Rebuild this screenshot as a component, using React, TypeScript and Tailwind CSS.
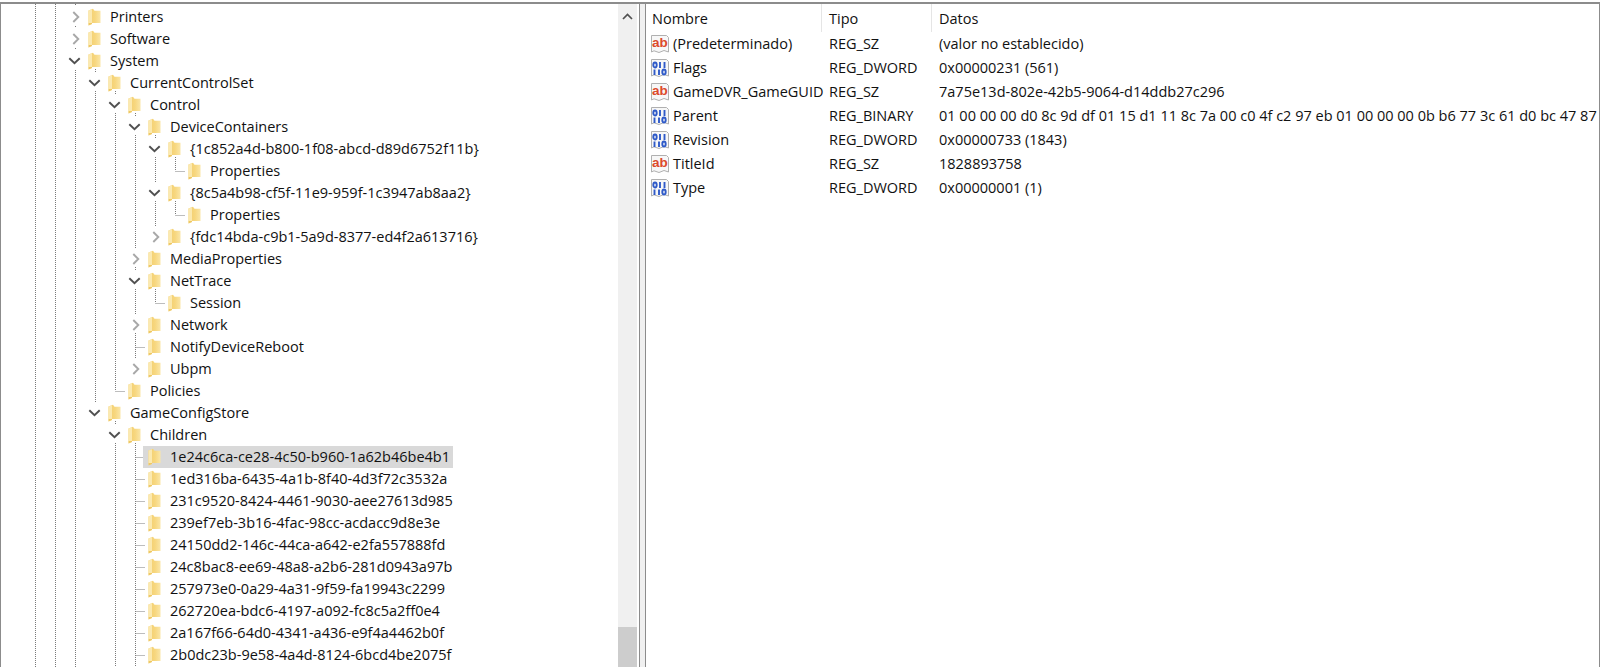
import React from "react";

type Row = { label: string; level: number; chev?: "open" | "closed"; selected?: boolean; more?: boolean };

const rows: Row[] = [
  { label: "Printers", level: 0, chev: "closed" },
  { label: "Software", level: 0, chev: "closed" },
  { label: "System", level: 0, chev: "open" },
  { label: "CurrentControlSet", level: 1, chev: "open" },
  { label: "Control", level: 2, chev: "open" },
  { label: "DeviceContainers", level: 3, chev: "open" },
  { label: "{1c852a4d-b800-1f08-abcd-d89d6752f11b}", level: 4, chev: "open" },
  { label: "Properties", level: 5 },
  { label: "{8c5a4b98-cf5f-11e9-959f-1c3947ab8aa2}", level: 4, chev: "open" },
  { label: "Properties", level: 5 },
  { label: "{fdc14bda-c9b1-5a9d-8377-ed4f2a613716}", level: 4, chev: "closed" },
  { label: "MediaProperties", level: 3, chev: "closed" },
  { label: "NetTrace", level: 3, chev: "open" },
  { label: "Session", level: 4 },
  { label: "Network", level: 3, chev: "closed" },
  { label: "NotifyDeviceReboot", level: 3 },
  { label: "Ubpm", level: 3, chev: "closed" },
  { label: "Policies", level: 2 },
  { label: "GameConfigStore", level: 1, chev: "open", more: true },
  { label: "Children", level: 2, chev: "open", more: true },
  { label: "1e24c6ca-ce28-4c50-b960-1a62b46be4b1", level: 3, selected: true },
  { label: "1ed316ba-6435-4a1b-8f40-4d3f72c3532a", level: 3 },
  { label: "231c9520-8424-4461-9030-aee27613d985", level: 3 },
  { label: "239ef7eb-3b16-4fac-98cc-acdacc9d8e3e", level: 3 },
  { label: "24150dd2-146c-44ca-a642-e2fa557888fd", level: 3 },
  { label: "24c8bac8-ee69-48a8-a2b6-281d0943a97b", level: 3 },
  { label: "257973e0-0a29-4a31-9f59-fa19943c2299", level: 3 },
  { label: "262720ea-bdc6-4197-a092-fc8c5a2ff0e4", level: 3 },
  { label: "2a167f66-64d0-4341-a436-e9f4a4462b0f", level: 3 },
  { label: "2b0dc23b-9e58-4a4d-8124-6bcd4be2075f", level: 3 },
];

const values: { name: string; kind: "sz" | "bin"; type: string; data: string }[] = [
  { name: "(Predeterminado)", kind: "sz", type: "REG_SZ", data: "(valor no establecido)" },
  { name: "Flags", kind: "bin", type: "REG_DWORD", data: "0x00000231 (561)" },
  { name: "GameDVR_GameGUID", kind: "sz", type: "REG_SZ", data: "7a75e13d-802e-42b5-9064-d14ddb27c296" },
  { name: "Parent", kind: "bin", type: "REG_BINARY", data: "01 00 00 00 d0 8c 9d df 01 15 d1 11 8c 7a 00 c0 4f c2 97 eb 01 00 00 00 0b b6 77 3c 61 d0 bc 47 87 e" },
  { name: "Revision", kind: "bin", type: "REG_DWORD", data: "0x00000733 (1843)" },
  { name: "TitleId", kind: "sz", type: "REG_SZ", data: "1828893758" },
  { name: "Type", kind: "bin", type: "REG_DWORD", data: "0x00000001 (1)" },
];

function Folder() {
  return (
    <svg width="13" height="18" viewBox="0 0 13 18" className="shrink-0">
      <defs>
        <linearGradient id="fold" x1="0" y1="0" x2="1" y2="0">
          <stop offset="0" stopColor="#f2cd6c" />
          <stop offset="0.55" stopColor="#f7d77f" />
          <stop offset="1" stopColor="#fae6a8" />
        </linearGradient>
      </defs>
      <path d="M0.5 2.5 L5 0.8 L6.5 2.8 H12.5 V15 H0.5 Z" fill="url(#fold)" />
      <path d="M0.5 2.5 L4 1.2 V16 L0.5 17.5 Z" fill="#fbe9b0" />
      <path d="M0.5 17.5 L4 16 V15 H0.5 Z" fill="#eec765" />
    </svg>
  );
}

function Chevron({ open }: { open: boolean }) {
  return open ? (
    <svg width="13" height="8" viewBox="0 0 13 8" className="shrink-0 ml-[-2px]">
      <path d="M1.3 1.3 L6.5 6.3 L11.7 1.3" fill="none" stroke="#505050" strokeWidth="1.9" />
    </svg>
  ) : (
    <svg width="8" height="12" viewBox="0 0 8 12" className="shrink-0 ml-[2px]">
      <path d="M1.3 1 L6.3 6 L1.3 11" fill="none" stroke="#a8a8a8" strokeWidth="1.9" />
    </svg>
  );
}

function ValueIcon({ kind }: { kind: "sz" | "bin" }) {
  return (
    <svg width="20" height="20" viewBox="0 0 20 20" className="shrink-0">
      <path d="M1.5 1.5 H16.5 L18.5 3.5 V18 L14 16.5 L9 18.5 L4 16.8 L1.5 18 Z" fill="#f7f7f7" stroke="#b0b0b0" />
      {kind === "sz" ? (
        <text x="2" y="12.5" fontSize="13.5" fontWeight="700" fill="#dd4a2c" fontFamily="Liberation Sans, sans-serif">ab</text>
      ) : (
        <g fill="none" stroke="#2f5ac8" strokeWidth="1.9">
          <ellipse cx="5" cy="7" rx="1.7" ry="2.5" />
          <path d="M10 4 V10" />
          <path d="M14.5 4 V10" />
          <path d="M4.5 11.5 V17" />
          <path d="M9 11.5 V17" />
          <ellipse cx="14" cy="14" rx="1.7" ry="2.5" />
        </g>
      )}
    </svg>
  );
}

const ROW = 22;
const TOP = 2;

function Guides() {
  const segs: React.ReactNode[] = [];
  const masks: React.ReactNode[] = [];
  [34, 54, 74].forEach((x) => segs.push(<path key={x} d={`M${x}.5 0 V667`} />));
  rows.forEach((r, i) => {
    const cx = 74 + r.level * 20;
    const y = TOP + i * ROW + 11;
    if (!r.chev) segs.push(<path key={`h${i}`} d={`M${cx}.5 ${y}.5 H${cx + 10}`} />);
    if (r.chev) masks.push(<rect key={`m${i}`} x={cx - 1} y={y - 11} width="3" height="19" fill="#fff" stroke="none" />);
    if (r.chev === "open") {
      let end = i;
      for (let j = i + 1; j < rows.length && rows[j].level > r.level; j++) {
        if (rows[j].level === r.level + 1) end = j;
      }
      const endY = r.more ? 667 : TOP + end * ROW + 11;
      segs.push(<path key={`v${i}`} d={`M${cx + 20}.5 ${y + 8} V${endY}`} />);
    }
  });
  return (
    <svg className="absolute inset-0 pointer-events-none" width="618" height="667" fill="none" stroke="#7a7a7a" strokeDasharray="1 1">
      {segs}
      {masks}
    </svg>
  );
}

export default function App() {
  return (
    <div
      className="h-[667px] w-[1600px] overflow-hidden bg-white text-[14.5px] text-[#111111] flex flex-col"
      style={{ fontFamily: '"Open Sans", "Noto Sans", sans-serif' }}
    >
      <div className="h-[4px] bg-[#8c8c8c] shrink-0 border-t-2 border-white" />
      <div className="flex flex-1 min-h-0">
        <div className="relative w-[618px] overflow-hidden border-l border-[#8c8c8c] pt-[2px]">
          <Guides />
          {rows.map((r, i) => (
            <div key={i} className="relative h-[22px] flex items-center" style={{ paddingLeft: 69 + r.level * 20 }}>
              <span className="w-[13px] flex items-center shrink-0">
                {r.chev ? <Chevron open={r.chev === "open"} /> : null}
              </span>
              <span className={`flex items-center h-[22px] pl-[5px] ${r.selected ? "bg-[#d9d9d9]" : ""}`}>
                <Folder />
                <span className="pl-[9px] pr-[3px] whitespace-nowrap leading-[22px]">{r.label}</span>
              </span>
            </div>
          ))}
        </div>
        <div className="w-[19px] shrink-0 bg-[#f0f0f0] flex flex-col items-center justify-between">
          <svg width="11" height="7" viewBox="0 0 11 7" className="mt-[9px]">
            <path d="M1 6 L5.5 1.5 L10 6" fill="none" stroke="#505050" strokeWidth="1.7" />
          </svg>
          <div className="w-full h-[40px] bg-[#cdcdcd]" />
        </div>
        <div className="w-[2px] bg-white shrink-0" />
        <div className="w-[1px] bg-[#8c8c8c] shrink-0" />
        <div className="w-[5px] bg-[#f0f0f0] shrink-0" />
        <div className="w-[1px] bg-[#8c8c8c] shrink-0" />
        <div className="flex-1 min-w-0 overflow-hidden border-r border-[#8c8c8c]">
          <div className="flex h-[28px]">
            <div className="w-[176px] pl-[6px] pt-[2px] border-r border-[#e5e5e5] h-full flex items-center shrink-0">Nombre</div>
            <div className="w-[110px] pl-[7px] pt-[2px] border-r border-[#e5e5e5] h-full flex items-center shrink-0">Tipo</div>
            <div className="pl-[7px] pt-[2px] flex items-center">Datos</div>
          </div>
          {values.map((v) => (
            <div key={v.name} className="flex h-[24px] items-center">
              <div className="w-[176px] pl-[4px] flex items-center shrink-0 whitespace-nowrap">
                <ValueIcon kind={v.kind} />
                <span className="pl-[3px]">{v.name}</span>
              </div>
              <div className="w-[110px] pl-[7px] shrink-0">{v.type}</div>
              <div className="pl-[7px] whitespace-nowrap">{v.data}</div>
            </div>
          ))}
        </div>
      </div>
    </div>
  );
}
